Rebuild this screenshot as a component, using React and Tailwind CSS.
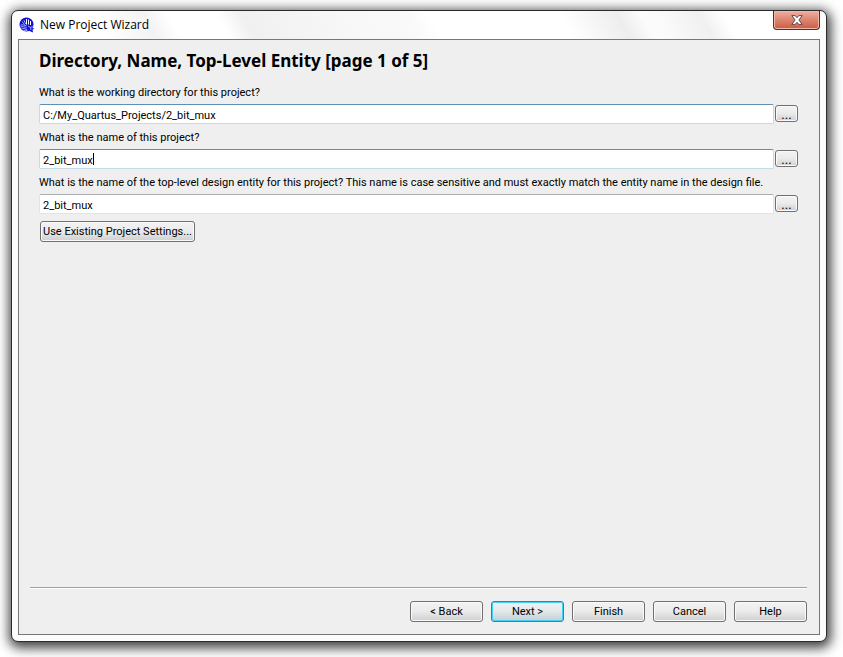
import { useState } from 'react';

const FIELDS = [
  {
    id: 'directory',
    label: 'What is the working directory for this project?',
    value: 'C:/My_Quartus_Projects/2_bit_mux',
    border: 'border-[#c3dcec] border-t-[#5e8fb5]',
  },
  {
    id: 'name',
    label: 'What is the name of this project?',
    value: '2_bit_mux',
    border: 'border-[#c3dcec] border-t-[#5e8fb5]',
    caret: true,
  },
  {
    id: 'entity',
    label:
      'What is the name of the top-level design entity for this project? This name is case sensitive and must exactly match the entity name in the design file.',
    value: '2_bit_mux',
    border: 'border-[#e2e3ea] border-t-[#abadb3]',
  },
];

const BUTTON =
  'rounded-[3px] border border-[#707070] bg-linear-to-b from-[#f3f3f3] from-0% via-[#ebebeb] via-49% to-[#cfcfcf] pt-[2px] text-black shadow-[inset_0_0_0_1px_#fafafa]';

const NEXT_BUTTON =
  'rounded-[3px] border border-[#3c7fb1] bg-linear-to-b from-[#f0f3f4] from-0% via-[#e2e8eb] via-49% to-[#c2cfd5] pt-[2px] text-black shadow-[inset_0_0_0_1px_#48d0f4]';

function QuartusIcon() {
  return (
    <svg viewBox="0 0 16 16" className="size-4" aria-hidden="true">
      <circle cx="7.5" cy="7.5" r="7" fill="#1010dc" />
      <path d="M10 10.500l5.500 1-2 1.300.5 2.700-3.500-1.500z" fill="#1010dc" />
      <g fill="none" stroke="#fff" strokeWidth="1">
        <path d="M7.500 2v5.500M9.500 2.500v5M11.500 4v4" />
        <path d="M3 4.500l2.500 3M4.800 3l2 4" strokeWidth="0.6" />
      </g>
      <g fill="none" stroke="#c9d2ff" strokeWidth="0.8">
        <path d="M1.500 8.200c2-.6 4-.4 6 .8M1.500 10c2-.6 4.200-.3 6.200.9M2.500 11.800c1.700-.5 3.700-.2 5.700.9M4.500 13.400c1.200-.3 2.500-.1 4 .5" />
        <path d="M9 9l2.500 1.500 2-1M11.500 10.500l.5 2.500" />
      </g>
    </svg>
  );
}

function TitleBar() {
  return (
    <header className="flex h-7 items-start justify-between bg-[linear-gradient(61deg,#fff_11%,#f3f3f3_17%,#fff_20%,#fff_26%,#f0f0f0_29%,#f8f8f8_42%,#f9f9f9_49%,#fff_52%,#fff_68%,#ededed_75%,#fcfcfc_78%,#fafafa_80%,#f0f0f0_85%,#fff_88%)]">
      <div className="flex h-7 items-center gap-1 pl-px">
        <QuartusIcon />
        <h1 className="pl-px font-['Open_Sans',sans-serif] text-[12px] text-black">New Project Wizard</h1>
      </div>
      <button
        type="button"
        aria-label="Close"
        className="flex h-[19px] w-[47px] items-center justify-center rounded-b-[4px] border border-t-0 border-[#5b2a22] bg-linear-to-b from-[#f0b0a2] from-0% via-[#dd8874] via-45% to-[#cc5a40] shadow-[inset_0_0_0_1px_#f0b8a8]"
      >
        <svg viewBox="0 0 12 10" className="h-[10px] w-3" aria-hidden="true">
          <path
            d="M.8.6h3.400L6 2.700 7.800.6h3.400L7.900 5l3.300 4.400H7.800L6 7.300 4.200 9.400H.8L4.100 5z"
            fill="#fff"
            stroke="#5c4a50"
            strokeWidth="1"
          />
        </svg>
      </button>
    </header>
  );
}

function Field({ field }) {
  const [value, setValue] = useState(field.value);

  return (
    <div>
      <label htmlFor={field.id} className="block h-[25px] truncate leading-[28px]">
        {field.label}
      </label>
      <div className="flex h-5 items-start gap-px">
        <div className="relative h-5 flex-1">
          <input
            id={field.id}
            type="text"
            value={value}
            onChange={(e) => setValue(e.target.value)}
            className={`block h-5 w-full rounded-[2px] border bg-white px-[3px] pt-[2px] outline-none ${field.border}`}
          />
          {field.caret && <span className="absolute top-1 left-[54px] h-3 w-px bg-black" />}
        </div>
        <button
          type="button"
          aria-label="Browse"
          className={`mt-px flex h-[17px] w-[23px] items-center justify-center text-[13px] ${BUTTON}`}
        >
          ...
        </button>
      </div>
    </div>
  );
}

export default function App() {
  return (
    <div className="flex min-h-screen bg-white pt-[10px] pr-4 pb-[15px] pl-[11px] font-['Roboto',sans-serif] text-[11px] text-black">
      <div className="flex min-w-0 flex-1 flex-col rounded-[7px] border border-[#2b2b2b] bg-[#fcfcfc] px-[6px] pb-[6px] shadow-[1px_3px_12px_3px_rgba(0,0,0,0.75)]">
        <TitleBar />
        <main className="flex flex-1 flex-col border border-[#777] bg-[#efefef] pr-3 pb-3 pl-[11px]">
          <section className="flex-1 px-[9px]">
            <h2 className="pt-[3px] pb-px font-['Noto_Sans',sans-serif] text-[17px] leading-[35px] font-bold">
              Directory, Name, Top-Level Entity [page 1 of 5]
            </h2>
            {FIELDS.map((field) => (
              <Field key={field.id} field={field} />
            ))}
            <button type="button" className={`mt-[7px] ml-px h-[21px] w-[155px] whitespace-nowrap ${BUTTON}`}>
              Use Existing Project Settings...
            </button>
          </section>

          <footer className="flex justify-end gap-2 border-t border-[#a0a0a0] pt-[13px] shadow-[inset_0_1px_0_#fff]">
            <button type="button" className={`h-[21px] w-[73px] ${BUTTON}`}>&lt; Back</button>
            <button type="button" className={`h-[21px] w-[73px] ${NEXT_BUTTON}`}>Next &gt;</button>
            <button type="button" className={`h-[21px] w-[73px] ${BUTTON}`}>Finish</button>
            <button type="button" className={`h-[21px] w-[73px] ${BUTTON}`}>Cancel</button>
            <button type="button" className={`h-[21px] w-[73px] ${BUTTON}`}>Help</button>
          </footer>
        </main>
      </div>
    </div>
  );
}
